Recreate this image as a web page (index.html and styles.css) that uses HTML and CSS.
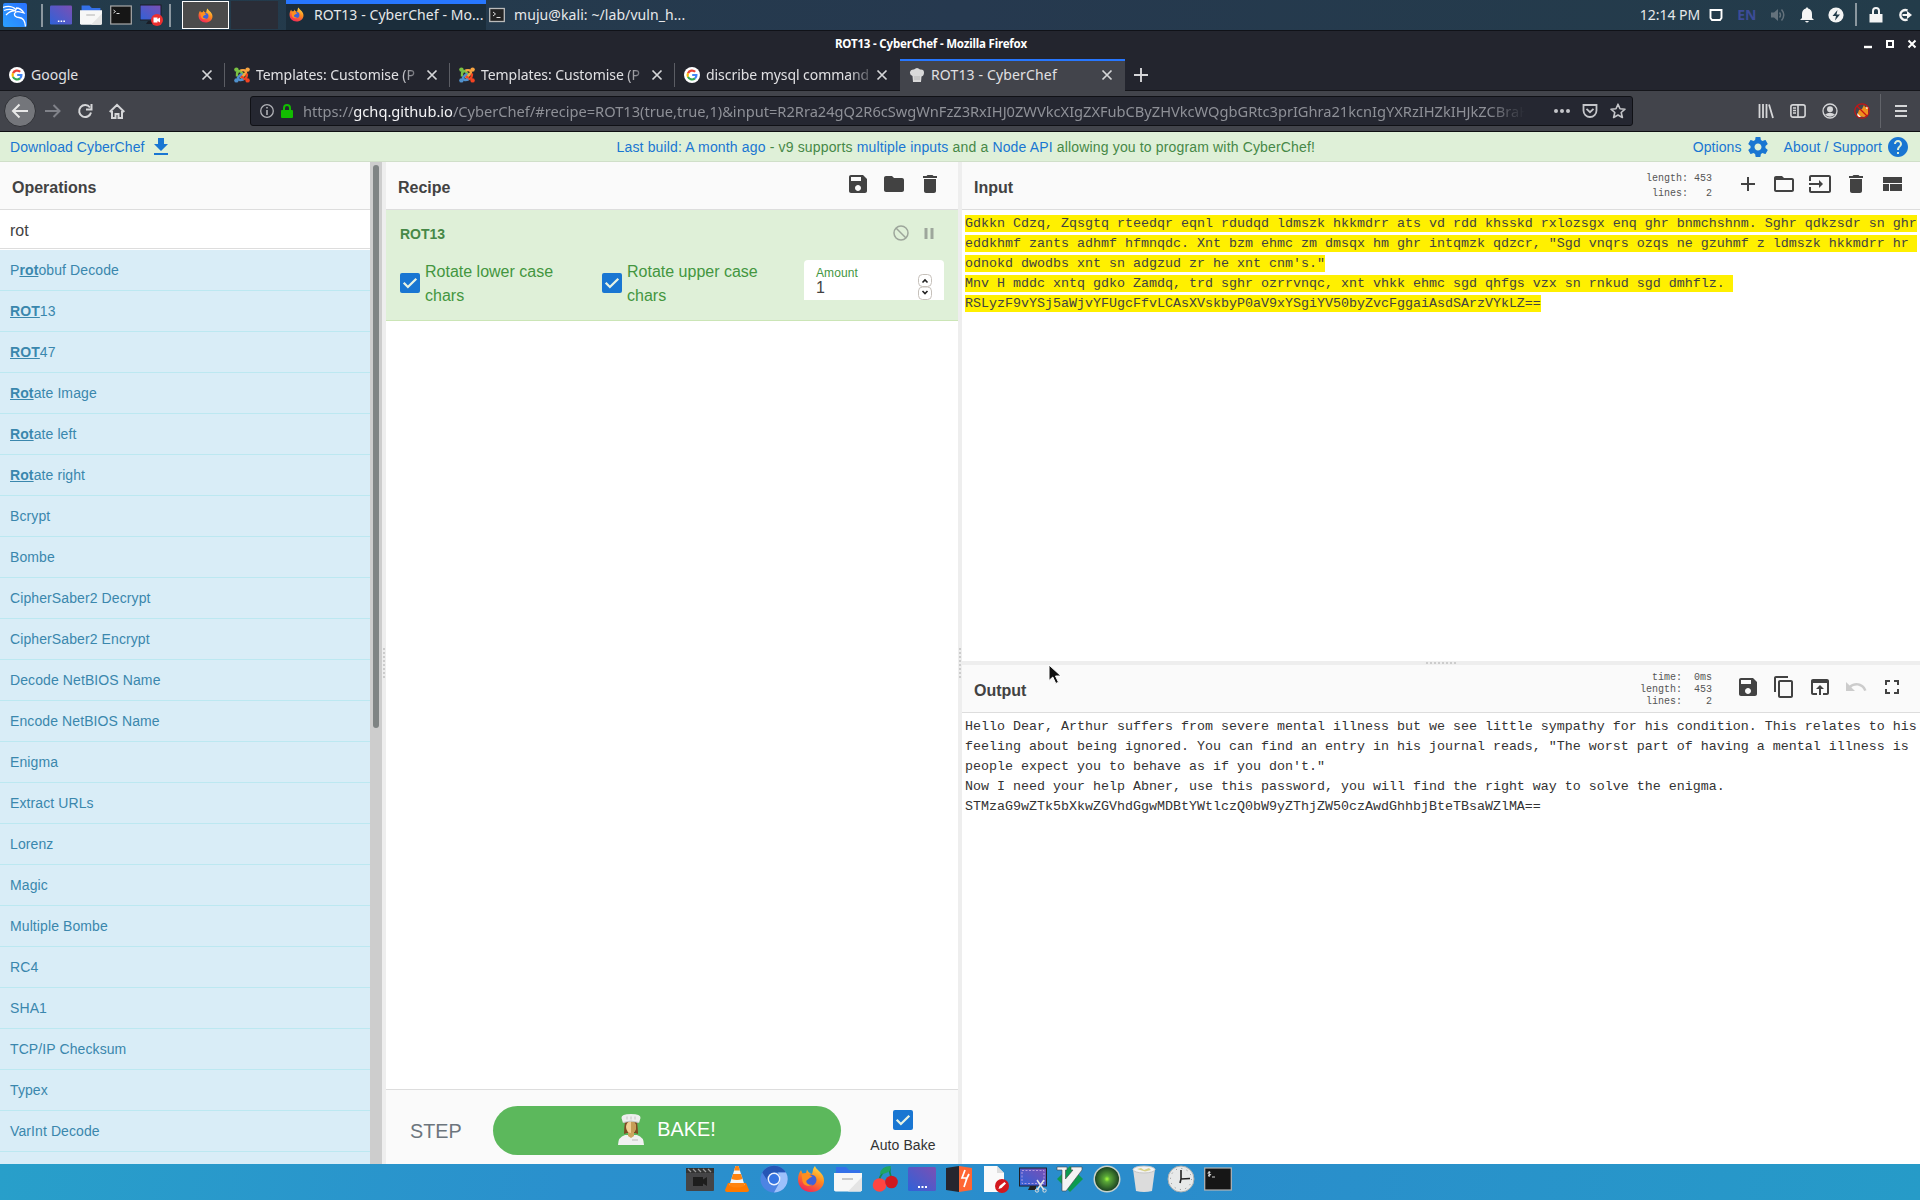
FILE: index.html
```html
<!DOCTYPE html>
<html lang="en">
<head>
<meta charset="utf-8">
<title>ROT13 - CyberChef</title>
<link rel="stylesheet" href="styles.css">
</head>
<body>
<svg class="defs" width="0" height="0">
  <defs>
    <linearGradient id="gScreen" x1="0" y1="1" x2="1" y2="0"><stop offset="0" stop-color="#2f62d8"/><stop offset="1" stop-color="#7b4fb4"/></linearGradient>
    <linearGradient id="gKali" x1="0" y1="1" x2="1" y2="0"><stop offset="0" stop-color="#2aa0ff"/><stop offset="1" stop-color="#2a72ff"/></linearGradient>
    <linearGradient id="gFox" x1="0.8" y1="0" x2="0.3" y2="1"><stop offset="0" stop-color="#ffe14a"/><stop offset="0.45" stop-color="#ff8a1e"/><stop offset="1" stop-color="#f0245a"/></linearGradient>
    <radialGradient id="gEye"><stop offset="0" stop-color="#a6ff3a"/><stop offset="0.25" stop-color="#5aa838"/><stop offset="1" stop-color="#1d4422"/></radialGradient>
  </defs>
  <symbol id="firefox" viewBox="0 0 28 28"><path d="M14 27C6.500 27 1 21.500 1 14.500c0-4 1.200-7 3-9.500l1.500 3.500L9 8l1-3.500c1 2.500 3 4 5 4.500 1-2 .5-5.500 3-8 .5 3 6 5.500 8 10 3.500 8-2.500 16-12 16z" fill="url(#gFox)"/><circle cx="14" cy="15" r="5.500" fill="#3f63d8"/><path d="M4.500 9c4-1.500 8 0 11 3-3 0-4 2.500-6 3.500-1 3 3 5 6 4-4 3-9 1-10-3z" fill="#ff8f1f"/></symbol>
  <symbol id="files" viewBox="0 0 28 28"><path d="M2 2h10l3 3h11v8H2z" fill="#3470e8"/><path d="M0 8h28v17.500l-1.500 1H1.500L0 25.500z" fill="#f7f7f7"/><path d="M28 12v13.500l-1.500 1H14z" fill="#e4e4e4"/><path d="M8 14h11" stroke="#bbb" stroke-width="1.500"/></symbol>
  <symbol id="screen" viewBox="0 0 28 28"><rect y="2" width="28" height="24" rx="1.500" fill="url(#gScreen)"/><path d="M10 22h2m1.500 0h2m1.500 0h2" stroke="#fff" stroke-width="2"/></symbol>
  <symbol id="google" viewBox="0 0 16 16"><circle cx="8" cy="8" r="8" fill="#fff"/><g fill="none" stroke-width="2.200"><path d="M11.200 4.800A4.500 4.500 0 0 0 4 6.200" stroke="#ea4335"/><path d="M4 6.200a4.500 4.500 0 0 0 0 3.700" stroke="#fbbc05"/><path d="M4 9.900a4.500 4.500 0 0 0 7 1.500" stroke="#34a853"/><path d="M11 11.400A4.400 4.400 0 0 0 12.400 8H8.200" stroke="#4285f4"/></g></symbol>
  <symbol id="joomla" viewBox="0 0 16 16"><g fill="none" stroke-width="2.400"><path d="M3 9.500V7q0-3 3-3l5 5" stroke="#7ac143"/><path d="M6.500 3.500Q12 2 12 6L6.500 11" stroke="#f9a541"/><path d="M13 6.500q0 5.500-3 5.500L5.500 7.500" stroke="#f44321"/><path d="M9.500 12.500Q4 14 4 10.500l4-4" stroke="#5091cd"/></g><circle cx="2.400" cy="2.600" r="2.200" fill="#7ac143"/><circle cx="13.600" cy="2.600" r="2.200" fill="#f9a541"/><circle cx="13.600" cy="13.400" r="2.200" fill="#f44321"/><circle cx="2.400" cy="13.400" r="2.200" fill="#5091cd"/></symbol>
  <symbol id="close" viewBox="0 0 12 12"><path d="M1.500 1.500l9 9m0-9l-9 9" stroke="#d5d6d8" stroke-width="1.700"/></symbol>
  <symbol id="save" viewBox="0 0 24 24"><path d="M17 3H5c-1.110 0-2 .9-2 2v14c0 1.100.89 2 2 2h14c1.100 0 2-.9 2-2V7l-4-4zm-5 16c-1.660 0-3-1.340-3-3s1.340-3 3-3 3 1.340 3 3-1.340 3-3 3zm3-10H5V5h10v4z"/></symbol>
  <symbol id="delete" viewBox="0 0 24 24"><path d="M6 19c0 1.100.9 2 2 2h8c1.100 0 2-.9 2-2V7H6v12zM19 4h-3.500l-1-1h-5l-1 1H5v2h14V4z"/></symbol>
  <symbol id="check" viewBox="0 0 20 20"><rect width="20" height="20" rx="2" fill="#1976d2"/><path d="M3.700 9.800l4.200 4.200 8.400-8.300" fill="none" stroke="#e8f3e4" stroke-width="2.300"/></symbol>
</svg>

<header class="panel">
  <svg class="kali" width="24" height="24" viewBox="0 0 24 24"><rect width="24" height="24" rx="2" fill="url(#gKali)"/><path d="M0 4.500Q8 1.500 13.500 7M1 7.500q6-2.500 12 .5M3 12q4-4.500 10-4M13 5q5 0 8 5l-2-.5Q13 7.500 11.500 10.500q-.5 3.500 4.500 4 6 .5 6.500 9" fill="none" stroke="#fff" stroke-width="1.300"/></svg>
  <i class="bar b1"></i>
  <svg width="22" height="22"><use href="#screen"/></svg>
  <svg width="22" height="22"><use href="#files"/></svg>
  <svg width="22" height="20" viewBox="0 0 22 20"><rect x=".7" y="1" width="20.600" height="18" fill="#161616" stroke="#aaa" stroke-width="1.200"/><path d="M3.500 5l2 1.500-2 1.500M6.500 8.500h3" stroke="#ddd" fill="none"/></svg>
  <svg width="24" height="22" viewBox="0 0 24 22"><rect width="21" height="15" y="1" fill="url(#gScreen)" stroke="#1c1c26"/><path d="M8 17h5v3H6z" fill="#191d27"/><circle cx="17" cy="16" r="6" fill="#ed2f2f"/><path d="M13.500 13.500h4v1.500l2.500-1.500v5l-2.500-1.500v1.500h-4z" fill="#fff"/></svg>
  <i class="bar b2"></i>
  <div class="launcher"><svg width="15" height="15"><use href="#firefox"/></svg></div>
  <div class="task active"><svg width="15" height="15"><use href="#firefox"/></svg><span>ROT13 - CyberChef - Mo...</span></div>
  <div class="task"><svg width="16" height="16" viewBox="0 0 16 16"><rect x=".7" y="1.500" width="14.600" height="13" fill="#222" stroke="#bbb" stroke-width="1.300"/><path d="M4 5l2.500 2L4 9M7.500 10.500h4" stroke="#ddd" fill="none"/></svg><span>muju@kali: ~/lab/vuln_h...</span></div>
  <div class="tray">
    <time>12:14 PM</time>
    <svg width="14" height="14" viewBox="0 0 14 14"><path d="M1.500 2h11v8l-1.500 2H3l-1.500-2z" fill="none" stroke="#fff" stroke-width="1.900"/></svg>
    <b>EN</b>
    <svg width="16" height="16" viewBox="0 0 16 16" fill="none" stroke="#64727c" stroke-width="1.500"><path d="M1 5.500h3L8 2v12L4 10.500H1z" fill="#64727c" stroke="none"/><path d="M9.500 5.500q2 2.500 0 5M11.500 2.500q4.500 5.500 0 11"/></svg>
    <svg width="14" height="16" viewBox="0 0 14 16" fill="#f4f4f4"><path d="M7 0l1.200 1.500Q12 2.500 12 7v4l2 2H0l2-2V7q0-4.500 3.800-5.500zM5 14h4q-2 3-4 0z"/></svg>
    <svg width="16" height="16" viewBox="0 0 16 16"><circle cx="8" cy="8" r="7.600" fill="#f4f4f4"/><path d="M9.500 3L4.500 9H8l-1 4.500 5-6H8.500z" fill="#233b4a"/></svg>
    <i class="bar"></i>
    <svg width="14" height="16" viewBox="0 0 14 16"><path d="M1 7h12.500v8.500H.5V7z" fill="#f4f4f4"/><path d="M4 8V4q0-3 3-3t3 3v4" fill="none" stroke="#f4f4f4" stroke-width="2"/></svg>
    <svg width="16" height="14" viewBox="0 0 16 14"><path d="M10.500 2.500A5 5 0 1 0 10.500 11.500" fill="none" stroke="#f4f4f4" stroke-width="2.400"/><path d="M5.500 6H10V3l5 4-5 4V8H5.500z" fill="#f4f4f4"/></svg>
  </div>
</header>

<div class="titlebar">
  <span>ROT13 - CyberChef - Mozilla Firefox</span>
  <svg width="54" height="12" viewBox="0 0 54 12" fill="none" stroke="#fff"><path d="M1 9h8" stroke-width="2.400"/><rect x="24" y="3" width="6" height="6" stroke-width="2"/><path d="M45.500 2.500l7 7m0-7l-7 7" stroke-width="2"/></svg>
</div>

<nav class="tabs">
  <div class="tab"><svg width="16" height="16"><use href="#google"/></svg><span>Google</span><svg class="x" width="12" height="12"><use href="#close"/></svg></div>
  <div class="tab"><svg width="16" height="16"><use href="#joomla"/></svg><span class="fade">Templates: Customise (P</span><svg class="x" width="12" height="12"><use href="#close"/></svg></div>
  <div class="tab"><svg width="16" height="16"><use href="#joomla"/></svg><span class="fade">Templates: Customise (P</span><svg class="x" width="12" height="12"><use href="#close"/></svg></div>
  <div class="tab last"><svg width="16" height="16"><use href="#google"/></svg><span class="fade">discribe mysql command</span><svg class="x" width="12" height="12"><use href="#close"/></svg></div>
  <div class="tab current"><svg width="16" height="16" viewBox="0 0 16 16"><path d="M4 15l-.5-6Q.5 8 1 5t4-2.500q3-3 6 0 4-.5 4 3t-2.500 4L12 15z" fill="#d9d9d9"/><path d="M6 9v4M8 9v4M10 9v4" stroke="#b5b5b5"/></svg><span>ROT13 - CyberChef</span><svg class="x" width="12" height="12"><use href="#close"/></svg></div>
  <svg class="plus" width="16" height="16" viewBox="0 0 16 16"><path d="M8 1v14M1 8h14" stroke="#d5d6d8" stroke-width="1.900"/></svg>
</nav>

<div class="navbar">
  <div class="back"><svg width="18" height="16" viewBox="0 0 18 16" fill="none" stroke="#e8e8e8" stroke-width="2"><path d="M17 8H2M8.500 1.500L2 8l6.500 6.500"/></svg></div>
  <svg class="fwd" width="16" height="16" viewBox="0 0 16 16" fill="none" stroke="#808289" stroke-width="2"><path d="M0 8h14M8.500 2L14.500 8l-6 6"/></svg>
  <svg class="reload" width="16" height="16" viewBox="0 0 16 16" fill="none" stroke="#d5d6d8" stroke-width="2"><path d="M13 4.500A6 6 0 1 0 14 9.500"/><path d="M14.500 1v5.500H9" /></svg>
  <svg class="home" width="16" height="16" viewBox="0 0 16 16" fill="none" stroke="#d5d6d8" stroke-width="2"><path d="M.7 9L8 1.800 15.300 9M3 8v7h3.500v-4h3v4H13V8"/></svg>
  <div class="urlbar">
    <svg width="14" height="14" viewBox="0 0 14 14" fill="none" stroke="#b0b1b6" stroke-width="1.300"><circle cx="7" cy="7" r="6.300"/><path d="M7 3v1.600M7 6v5" stroke-width="1.600"/></svg>
    <svg class="lock" width="12" height="14" viewBox="0 0 12 14"><rect y="6" width="12" height="8" rx="1" fill="#12bc00"/><path d="M3 7V4q0-3 3-3t3 3v3" fill="none" stroke="#12bc00" stroke-width="2"/></svg>
    <span class="url">https://<em>gchq.github.io</em>/CyberChef/#recipe=ROT13(true,true,1)&amp;input=R2Rra24gQ2R6cSwgWnFzZ3RxIHJ0ZWVkcXIgZXFubCByZHVkcWQgbGRtc3prIGhra21kcnIgYXRzIHZkIHJkZCBraH</span>
    <svg class="dots" width="16" height="4" viewBox="0 0 16 4" fill="#c4c5c9"><circle cx="2" cy="2" r="2"/><circle cx="8" cy="2" r="2"/><circle cx="14" cy="2" r="2"/></svg>
    <svg class="pocket" width="16" height="14" viewBox="0 0 16 14" fill="none" stroke="#c4c5c9" stroke-width="1.800"><path d="M1.500 1h13v5.500a6.500 6.500 0 0 1-13 0z"/><path d="M4.500 4.800L8 8.200l3.500-3.400"/></svg>
    <svg class="star" width="16" height="16" viewBox="0 0 16 16" fill="none" stroke="#c4c5c9" stroke-width="1.600" stroke-linejoin="round"><path d="M8 1.200l2 4.500 5 .5-3.800 3.300 1.200 5L8 12l-4.400 2.500 1.200-5L1 6.200l5-.5z"/></svg>
  </div>
  <div class="tools">
    <svg width="16" height="16" viewBox="0 0 16 16" stroke="#d5d6d8" stroke-width="1.800"><path d="M1.500 1v14M5 1v14M8.500 1v14M11 1.500l4 13.500"/></svg>
    <svg width="16" height="14" viewBox="0 0 16 14" fill="none" stroke="#d5d6d8" stroke-width="1.600"><rect x=".9" y=".9" width="14.200" height="12.200" rx="2"/><path d="M8 1v12M3 4h3M3 6.500h3M3 9h3"/></svg>
    <svg width="16" height="16" viewBox="0 0 16 16"><circle cx="8" cy="8" r="7" fill="none" stroke="#d5d6d8" stroke-width="1.300"/><circle cx="8" cy="6.300" r="3" fill="#d5d6d8"/><path d="M3 11.500q5-3.500 10 0-5 4.500-10 0z" fill="#d5d6d8"/></svg>
    <svg width="16" height="16" viewBox="0 0 16 16"><path d="M3 13l2-6 3-1 2-4 1 2 3 0 0 4 0 4-4 2z" fill="#f0901e"/><path d="M3 10l4 4H4zM13 3l2 2-3 1z" fill="#fff"/><circle cx="8" cy="8" r="7.200" fill="none" stroke="#c81414" stroke-width="1.200"/><path d="M3 3l10 10" stroke="#c81414" stroke-width="1.300"/></svg>
    <i></i>
    <svg width="14" height="14" viewBox="0 0 14 14" stroke="#d5d6d8" stroke-width="2"><path d="M1 2h12M1 7h12M1 12h12"/></svg>
  </div>
</div>

<main class="chef">
  <div class="banner">
    <a>Download CyberChef</a>
    <svg class="blue dl" width="24" height="24" viewBox="0 0 24 24"><path d="M19 9h-4V3H9v6H5l7 7 7-7zM5 18v2h14v-2H5z"/></svg>
    <p><a>Last build: A month ago</a> - v9 supports <a>multiple inputs</a> and a <a>Node API</a> allowing you to program with CyberChef!</p>
    <a class="opt">Options</a>
    <svg class="blue gear" width="24" height="24" viewBox="0 0 24 24"><path d="M19.430 12.980c.04-.32.07-.64.07-.98s-.03-.66-.07-.98l2.110-1.650c.19-.15.24-.42.12-.64l-2-3.460c-.12-.22-.39-.3-.61-.22l-2.490 1c-.52-.4-1.080-.73-1.690-.98l-.38-2.650C14.460 2.180 14.250 2 14 2h-4c-.25 0-.46.18-.49.42l-.38 2.650c-.61.25-1.170.59-1.690.98l-2.490-1c-.23-.09-.49 0-.61.22l-2 3.460c-.13.22-.07.49.12.64l2.110 1.650c-.04.32-.07.65-.07.98s.03.66.07.98l-2.110 1.650c-.19.15-.24.42-.12.64l2 3.460c.12.22.39.3.61.22l2.490-1c.52.4 1.080.73 1.690.98l.38 2.650c.03.24.24.42.49.42h4c.25 0 .46-.18.49-.42l.38-2.650c.61-.25 1.170-.59 1.690-.98l2.490 1c.23.09.49 0 .61-.22l2-3.460c.12-.22.07-.49-.12-.64l-2.110-1.650zM12 15.500c-1.930 0-3.500-1.570-3.500-3.500s1.570-3.500 3.500-3.500 3.500 1.570 3.500 3.500-1.570 3.500-3.500 3.500z"/></svg>
    <a class="about">About / Support</a>
    <svg class="blue help" width="24" height="24" viewBox="0 0 24 24"><path d="M12 2C6.480 2 2 6.480 2 12s4.480 10 10 10 10-4.480 10-10S17.520 2 12 2zm1 17h-2v-2h2v2zm2.070-7.750l-.9.92C13.450 12.900 13 13.500 13 15h-2v-.5c0-1.100.45-2.100 1.170-2.830l1.240-1.260c.37-.36.59-.86.59-1.410 0-1.100-.9-2-2-2s-2 .9-2 2H8c0-2.210 1.790-4 4-4s4 1.790 4 4c0 .88-.36 1.680-.93 2.250z"/></svg>
  </div>

  <div class="workspace">
    <section class="operations">
      <div class="oplist">
        <h2 class="head">Operations</h2>
        <div class="search">rot</div>
        <ul>
          <li>P<b>rot</b>obuf Decode</li><li><b>ROT</b>13</li><li><b>ROT</b>47</li><li><b>Rot</b>ate Image</li><li><b>Rot</b>ate left</li><li><b>Rot</b>ate right</li><li>Bcrypt</li><li>Bombe</li><li>CipherSaber2 Decrypt</li><li>CipherSaber2 Encrypt</li><li>Decode NetBIOS Name</li><li>Encode NetBIOS Name</li><li>Enigma</li><li>Extract URLs</li><li>Lorenz</li><li>Magic</li><li>Multiple Bombe</li><li>RC4</li><li>SHA1</li><li>TCP/IP Checksum</li><li>Typex</li><li>VarInt Decode</li><li></li>
        </ul>
      </div>
      <div class="scroll"><i></i></div>
    </section>
    <div class="gutter"><i></i></div>

    <section class="recipe">
      <div class="head"><h2>Recipe</h2>
        <div class="icons">
          <svg width="24" height="24"><use href="#save"/></svg>
          <svg width="24" height="24" viewBox="0 0 24 24"><path d="M10 4H4c-1.100 0-1.990.9-1.990 2L2 18c0 1.100.9 2 2 2h16c1.100 0 2-.9 2-2V8c0-1.100-.9-2-2-2h-8l-2-2z"/></svg>
          <svg width="24" height="24"><use href="#delete"/></svg>
        </div>
      </div>
      <div class="step">
        <div class="steptitle"><b>ROT13</b>
          <svg width="16" height="16" viewBox="0 0 16 16" fill="none" stroke="#9da69b" stroke-width="1.500"><circle cx="8" cy="8" r="7"/><path d="M3 3l10 10"/></svg>
          <svg width="10" height="11" viewBox="0 0 10 11" fill="#9da69b"><path d="M.5 0h3v11h-3zM6.500 0h3v11h-3z"/></svg>
        </div>
        <div class="args">
          <label><svg width="20" height="20"><use href="#check"/></svg><span>Rotate lower case chars</span></label>
          <label><svg width="20" height="20"><use href="#check"/></svg><span>Rotate upper case chars</span></label>
          <div class="amount"><div><small>Amount</small><span>1</span></div>
            <svg width="14" height="26" viewBox="0 0 14 26" fill="#fff" stroke="#c6c1bb"><rect x=".5" y=".5" width="13" height="12" rx="4"/><rect x=".5" y="13" width="13" height="12.500" rx="4"/><path d="M4.500 8.500L7 6l2.500 2.500M4.500 17L7 19.500 9.500 17" stroke="#222" stroke-width="1.600" fill="none"/></svg>
          </div>
        </div>
      </div>
      <div class="blank"></div>
      <footer>
        <span class="stepbtn">STEP</span>
        <button><svg width="26" height="32" viewBox="0 0 26 32"><path d="M0 31q0-8 7-10h12q7 2 7 10z" fill="#f1f1f1"/><path d="M14 26h6" stroke="#bbb"/><path d="M7 8h12q1 8 1 12l-3-1H9l-3 1q0-6 1-12z" fill="#7d4a22"/><path d="M10 17h6v5l-3 2-3-2z" fill="#cba45e"/><ellipse cx="13" cy="13" rx="5" ry="6" fill="#f0cf94"/><path d="M13 7q5 0 5 6t-5 6z" fill="#c79d57"/><path d="M5 9L3.500 4Q3 0 13 0t9.500 4L21 9q-8-3-16 0z" fill="#eee"/><path d="M5 8.500q8-3 16 0M9 2.500v3m4-3v3m4-3v3" fill="none" stroke="#bbb" stroke-width=".8"/></svg><span>BAKE!</span></button>
        <div class="auto"><svg width="20" height="20"><use href="#check"/></svg><span>Auto Bake</span></div>
      </footer>
    </section>
    <div class="gutter"><i></i></div>

    <section class="io">
      <div class="head"><h2>Input</h2>
        <pre class="stats in">length: 453
 lines:   2</pre>
        <div class="icons">
          <svg width="24" height="24" viewBox="0 0 24 24"><path d="M19 13h-6v6h-2v-6H5v-2h6V5h2v6h6v2z"/></svg>
          <svg width="24" height="24" viewBox="0 0 24 24"><path d="M20 6h-8l-2-2H4c-1.100 0-1.990.9-1.990 2L2 18c0 1.100.9 2 2 2h16c1.100 0 2-.9 2-2V8c0-1.100-.9-2-2-2zm0 12H4V8h16v10z"/></svg>
          <svg width="24" height="24" viewBox="0 0 24 24"><path d="M21 3.010H3c-1.100 0-2 .9-2 2V9h2V4.990h18v14.030H3V15H1v4.010c0 1.100.9 1.980 2 1.980h18c1.100 0 2-.88 2-1.980v-14c0-1.110-.9-2-2-2zM11 16l4-4-4-4v3H1v2h10v3z"/></svg>
          <svg width="24" height="24"><use href="#delete"/></svg>
          <svg width="24" height="24" viewBox="0 0 24 24"><path d="M3 19h6v-7H3v7zm7 0h12v-7H10v7zM3 5v6h19V5H3z"/></svg>
        </div>
      </div>
      <pre class="text intext"><mark>Gdkkn Cdzq, Zqsgtq rteedqr eqnl rdudqd ldmszk hkkmdrr ats vd rdd khsskd rxlozsgx enq ghr bnmchshnm. Sghr qdkzsdr sn ghr</mark>
<mark>eddkhmf zants adhmf hfmnqdc. Xnt bzm ehmc zm dmsqx hm ghr intqmzk qdzcr, "Sgd vnqrs ozqs ne gzuhmf z ldmszk hkkmdrr hr </mark>
<mark>odnokd dwodbs xnt sn adgzud zr he xnt cnm's."</mark>
<mark>Mnv H mddc xntq gdko Zamdq, trd sghr ozrrvnqc, xnt vhkk ehmc sgd qhfgs vzx sn rnkud sgd dmhflz. </mark>
<mark>RSLyzF9vYSj5aWjvYFUgcFfvLCAsXVskbyP0aV9xYSgiYV50byZvcFggaiAsdSArzVYkLZ==</mark></pre>
      <div class="hgutter"><i></i></div>
      <div class="head"><h2>Output</h2>
        <pre class="stats">  time:  0ms
length:  453
 lines:    2</pre>
        <div class="icons">
          <svg width="24" height="24"><use href="#save"/></svg>
          <svg width="24" height="24" viewBox="0 0 24 24"><path d="M16 1H4c-1.100 0-2 .9-2 2v14h2V3h12V1zm3 4H8c-1.100 0-2 .9-2 2v14c0 1.100.9 2 2 2h11c1.100 0 2-.9 2-2V7c0-1.100-.9-2-2-2zm0 16H8V7h11v14z"/></svg>
          <svg width="24" height="24" viewBox="0 0 24 24"><path d="M19 4H5c-1.110 0-2 .9-2 2v12c0 1.100.89 2 2 2h4v-2H5V8h14v10h-4v2h4c1.100 0 2-.9 2-2V6c0-1.100-.89-2-2-2zm-7 6l-4 4h3v6h2v-6h3l-4-4z"/></svg>
          <svg class="off" width="24" height="24" viewBox="0 0 24 24"><path d="M12.500 8c-2.650 0-5.050.99-6.900 2.600L2 7v9h9l-3.620-3.620c1.390-1.160 3.160-1.880 5.120-1.880 3.540 0 6.550 2.310 7.600 5.500l2.370-.78C21.080 11.030 17.150 8 12.500 8z"/></svg>
          <svg width="24" height="24" viewBox="0 0 24 24"><path d="M7 14H5v5h5v-2H7v-3zm-2-4h2V7h3V5H5v5zm12 7h-3v2h5v-5h-2v3zM14 5v2h3v3h2V5h-5z"/></svg>
        </div>
      </div>
      <pre class="text">Hello Dear, Arthur suffers from severe mental illness but we see little sympathy for his condition. This relates to his
feeling about being ignored. You can find an entry in his journal reads, "The worst part of having a mental illness is
people expect you to behave as if you don't."
Now I need your help Abner, use this password, you will find the right way to solve the enigma.
STMzaG9wZTk5bXkwZGVhdGgwMDBtYWtlczQ0bW9yZThjZW50czAwdGhhbjBteTBsaWZlMA==</pre>
    </section>
  </div>
</main>

<footer class="dock">
  <svg viewBox="0 0 28 28"><rect y="3" width="28" height="23" rx="1" fill="#444446"/><path d="M0 3h28v5H0z" fill="#333"/><path d="M2 4l3 3m2-3l3 3m2-3l3 3m2-3l3 3m2-3l3 3" stroke="#999" stroke-width="1.300"/><path d="M7 12h10v2.500l4-2.500v9l-4-2.500V21H7z" fill="#1d1d1d"/></svg>
  <svg viewBox="0 0 28 28"><path d="M5 18h18l3 7q0 2-2 2H4q-2 0-2-2z" fill="#ff7a00"/><path d="M12.500 1h3l6 19q-7.500 4-15 0z" fill="#f5f5f5"/><path d="M12.500 1h3l1.400 4.500h-5.800zM10 9h8l1.600 5q-5.600 2-11.200 0zM7.200 18h13.600l.9 3q-7.700 3-15.400 0z" fill="#ff8410"/></svg>
  <svg viewBox="0 0 28 28"><circle cx="14" cy="14" r="13.500" fill="#4d84e3"/><path d="M2.300 7.500a13.500 13.500 0 0 1 23.500 0H14l-6 9z" fill="#2556b5"/><path d="M26 7.500a13.500 13.500 0 0 1-12 20l6-11q1-5-2-9z" fill="#9cc0fb"/><circle cx="14" cy="14" r="6.500" fill="#eef3fd"/><circle cx="14" cy="14" r="5" fill="#3574e2"/></svg>
  <svg viewBox="0 0 28 28"><use href="#firefox"/></svg>
  <svg viewBox="0 0 28 28"><use href="#files"/></svg>
  <svg viewBox="0 0 28 28"><path d="M8 16Q9 8 19 2M20 12q-2-5-1-9" stroke="#138a4c" stroke-width="1.700" fill="none"/><path d="M9 9q1-8 11-8 0 8-11 8z" fill="#1fa463"/><circle cx="8.500" cy="20" r="6.800" fill="#ff4542"/><circle cx="20.500" cy="17" r="6.300" fill="#d01920"/></svg>
  <svg viewBox="0 0 28 28"><use href="#screen"/></svg>
  <svg viewBox="0 0 28 28"><path d="M1 3l13-2v26L1 25z" fill="#26262f"/><path d="M14 1l13 2v22l-13 2z" fill="#ff6633"/><path d="M20 5l-3 8h5l-3 9M24 9l-3 6" stroke="#fff" stroke-width="1.700" fill="none"/></svg>
  <svg viewBox="0 0 28 28"><path d="M2 1h13l7 7v19H2z" fill="#fafafa"/><path d="M15 1l7 7h-7z" fill="#dedede"/><circle cx="20" cy="21" r="7" fill="#d3181e"/><path d="M16.500 24l1-3 5-4 1.500 1.500-4.500 4.500z" fill="#fff"/></svg>
  <svg viewBox="0 0 28 28"><rect x=".5" y="3" width="27" height="18" fill="url(#gScreen)" stroke="#1d1d26"/><rect x="3" y="5.500" width="22" height="13" fill="none" stroke="#c8a8e8" stroke-dasharray="2 1.500" stroke-width=".8"/><path d="M11 21h6v4H9z" fill="#222"/><path d="M18 15l7 10M25 15l-7 10" stroke="#e6e6e6" stroke-width="1.500"/><circle cx="18" cy="25.500" r="1.700" fill="none" stroke="#ddd"/><circle cx="25.500" cy="25.500" r="1.700" fill="none" stroke="#ddd"/></svg>
  <svg viewBox="0 0 28 28"><path d="M14 1l13 13-13 13L1 14z" fill="#0c9a50"/><path d="M1 2h10v3H9.500v9L17 5h-2V2h11v3L10 26H6V5H1z" fill="#f4f4f4" stroke="#444" stroke-width=".6"/></svg>
  <svg viewBox="0 0 28 28"><circle cx="14" cy="14" r="13.500" fill="#c9d3cb"/><circle cx="14" cy="14" r="12" fill="url(#gEye)"/></svg>
  <svg viewBox="0 0 28 28"><path d="M3 4h22l-3 22q-8 2-16 0z" fill="#dcdcdc"/><ellipse cx="14" cy="4.500" rx="11" ry="3.500" fill="#f3f3f3" stroke="#c7c7c7"/><path d="M7 4l4-1 3 2 5-2 2 2-6 1.500z" fill="#d8d18a"/></svg>
  <svg viewBox="0 0 28 28"><circle cx="14" cy="14" r="13" fill="#e7e9e9" stroke="#a9afb0"/><path d="M14 5v9l9-.5M14 14l-1 4" stroke="#222" stroke-width="1.600" fill="none"/><circle cx="14" cy="14" r="10.500" fill="none" stroke="#888" stroke-dasharray="1 4.500"/></svg>
  <svg viewBox="0 0 28 28"><rect x=".7" y="3" width="26.600" height="22" fill="#161616" stroke="#b5b5b5" stroke-width="1.200"/><path d="M6.500 7.300q-3-.5-2.500 1t2.500 1.200-2.500 1.300M5.200 6v6M8 12h3" stroke="#e4e4e4" fill="none" stroke-width=".9"/></svg>
</footer>
<svg class="cursor" width="14" height="22" viewBox="0 0 14 22"><path d="M1 1v15.500l3.800-3.500 3 6.500 2.700-1.200-3-6.300H13z" fill="#111" stroke="#fff"/></svg>
</body>
</html>
```
FILE: styles.css
```css
* { box-sizing: border-box; }
body {
  margin: 0; width: 1920px; height: 1200px; overflow: hidden;
  display: flex; flex-direction: column;
  font-family: "Liberation Sans", Arial, sans-serif; font-size: 14px; color: #424242;
  background: #fff;
}
svg { display: block; flex: none; }
.defs { position: absolute; }
h2, p, ul, pre { margin: 0; padding: 0; }

/* desktop panel */
.panel {
  height: 31px; flex: none; display: flex; align-items: center;
  background: linear-gradient(90deg, #233b4a, #26394f 50%, #233c4a); border-bottom: 1px solid #101218;
  padding-left: 3px; gap: 8px; color: #e6e8ea;
  font-family: "Noto Sans", sans-serif; font-size: 14px; white-space: nowrap;
}
.bar { width: 2px; height: 23px; background: #8b979f; flex: none; }
.b1 { margin: 0 -1px 0 6px; }
.b2 { margin: 0 0 0 -3px; }
.launcher {
  width: 47px; height: 28px; margin-left: 3px; border: 1px solid #fff; background: #4b4b4b;
  display: flex; align-items: center; justify-content: center;
  box-shadow: 49px 0 0 #2a2d37;
}
.task { width: 200px; height: 30px; display: flex; align-items: center; gap: 10px; padding: 0 2px 1px 3px; overflow: hidden; letter-spacing: .08px; }
.task.active { margin-left: 49px; background: #1b2d3b; border-top: 4px solid #2777ff; padding-bottom: 5px; }
.task + .task { margin-left: -8px; gap: 9px; }
.tray { margin-left: auto; display: flex; align-items: center; gap: 14.3px; padding: 0 7px 1px 0; }
.tray time { width: 60px; margin-right: -5px; }
.tray b { color: #3d4c98; width: 18px; }
.tray .bar { margin: 0 -3px; }

/* window chrome */
.titlebar {
  height: 28px; flex: none; background: #23252e; color: #fff; display: flex; align-items: center;
  font: bold 11.5px "Noto Sans", sans-serif; letter-spacing: -.18px; padding: 0 3px 3px 835px; justify-content: space-between; white-space: nowrap;
}
.tabs {
  height: 32px; flex: none; display: flex; background: #23252e; border-bottom: 1px solid #15161b;
  font: 14px "Noto Sans", sans-serif; color: #e0e0e3;
}
.tab { width: 225px; height: 31px; display: flex; align-items: center; padding: 0 12px 0 9px; white-space: nowrap; position: relative; }
.tab::after { content: ""; position: absolute; right: 0; top: 4px; height: 24px; width: 1px; background: #5b5d64; }
.tab.last::after, .tab.current::after { display: none; }
.tab span { flex: 1; margin-left: 6px; }
.tab .fade { letter-spacing: -.06px; -webkit-mask-image: linear-gradient(90deg, #000 143px, transparent 170px); mask-image: linear-gradient(90deg, #000 143px, transparent 170px); }
.tab .x { margin-left: 5px; }
.tab.current { height: 32px; background: #42444b; border-top: 2px solid #2777ff; padding-bottom: 3px; letter-spacing: .15px; }
.plus { margin: 8px 0 0 8px; }

.navbar { height: 41px; flex: none; display: flex; align-items: center; background: #42444b; border-bottom: 1px solid #0e0f12; padding-left: 4px; }
.back { width: 32px; height: 32px; border-radius: 50%; background: #74767b; border: 1px solid #2f3136; display: flex; align-items: center; justify-content: center; }
.fwd { margin-left: 9px; }
.reload { margin-left: 16px; }
.home { margin-left: 16px; }
.urlbar {
  width: 1383px; height: 30px; margin-left: 125px; border: 1px solid #101116; border-radius: 3px;
  background: #252731; display: flex; align-items: center; padding: 0 6px 0 9px;
}
.lock { margin-left: 7px; }
.url {
  margin-left: 10px; width: 1230px; white-space: nowrap; color: #8e9097;
  font: 14.670px "Noto Sans", sans-serif; letter-spacing: -.02px;
  -webkit-mask-image: linear-gradient(90deg, #000 1185px, transparent 1222px); mask-image: linear-gradient(90deg, #000 1185px, transparent 1222px);
}
.url em { color: #f4f4f6; font-style: normal; }
.dots { margin-left: auto; }
.pocket, .star { margin-left: 12px; }
.tools { margin-left: auto; display: flex; align-items: center; gap: 16px; padding-right: 12px; }
.tools i { width: 1px; height: 34px; background: #62646a; margin: 0 -3px 0 -6px; }

/* application */
.chef { flex: 1; min-height: 0; display: flex; flex-direction: column; }
.banner {
  height: 30px; flex: none; background: #dff0d8; border-bottom: 1px solid #d0dfc9; color: #468847;
  display: flex; align-items: center; padding: 0 10px; white-space: nowrap; letter-spacing: .08px;
}
.banner a { color: #1976d2; }
.blue { fill: #1976d2; }
.dl { margin-left: 4px; }
.banner p { margin-left: 444px; letter-spacing: .155px; }
.banner .opt { margin-left: auto; }
.gear { margin-left: 4px; }
.about { margin-left: 14px; }
.help { margin-left: 4px; }
.workspace { flex: 1; min-height: 0; display: flex; }
.head {
  height: 48px; flex: none; background: #fafafa; border-bottom: 1px solid #ddd;
  display: flex; align-items: center; padding: 3px 12px 0; font-size: 16px; font-weight: bold;
}
h2.head { padding-top: 5px; }
.head h2 { font-size: 16px; padding-top: 2px; }
.icons { display: flex; gap: 12px; padding-bottom: 6px; margin-left: auto; fill: #424242; }
.off { fill: #ccc; }
.operations { width: 382px; display: flex; }
.oplist { width: 370px; overflow: hidden; }
.search { height: 39px; border-bottom: 1px solid #ddd; padding-left: 10px; line-height: 41px; font-size: 16px; }
.oplist ul { margin-top: 1px; list-style: none; letter-spacing: .1px; }
.oplist li { height: 41px; line-height: 41px; padding-left: 10px; background: #d9edf7; border-bottom: 1px solid #bce8f1; color: #3a87ad; }
.oplist b { text-decoration: underline; }
.scroll { width: 12px; background: #cdcdcd; padding: 3px; }
.scroll i { display: block; height: 563px; border-radius: 3px; background: #7f8484; }
.gutter { width: 4px; background: #eee; display: flex; align-items: center; justify-content: center; }
.gutter i { width: 2px; height: 30px; background: repeating-linear-gradient(#ccc 0 2px, transparent 2px 4px); }
.hgutter { height: 4px; flex: none; background: #eee; display: flex; align-items: center; justify-content: center; }
.hgutter i { height: 2px; width: 30px; background: repeating-linear-gradient(90deg, #ccc 0 2px, transparent 2px 4px); }

.recipe { width: 572px; display: flex; flex-direction: column; }
.recipe .icons { padding-right: 4px; }
.step { height: 111px; background: #dff0d8; border-bottom: 1px solid #cbe5b6; padding: 14px 14px 0; color: #468847; }
.steptitle { height: 18px; display: flex; align-items: center; }
.steptitle b { margin-right: auto; padding-top: 2px; }
.steptitle svg { margin: 0 10px 0 5px; }
.args { height: 50px; display: flex; margin-top: 17px; }
.args label { width: 202px; height: 50px; display: flex; align-items: center; font-size: 16px; line-height: 24px; color: #43963f; }
.args label svg { margin-top: 14px; align-self: flex-start; }
.args label span { width: 140px; margin-left: 5px; }
.amount { margin-top: 1px; width: 140px; height: 40px; background: #fff; border-radius: 4px 4px 0 0; padding: 0 12px; display: flex; justify-content: space-between; align-items: flex-end; }
.amount small { display: block; font-size: 12px; line-height: 14px; color: #43963f; letter-spacing: .1px; }
.amount span { display: block; font-size: 16px; line-height: 16px; color: #424242; height: 20px; }
.blank { flex: 1; }
.recipe footer { height: 75px; background: #fafafa; border-top: 1px solid #ddd; display: flex; padding: 16px 0 0 24px; }
.stepbtn { width: 83px; flex: none; font-size: 19.8px; color: #6c757d; line-height: 50px; }
.recipe button {
  width: 348px; flex: none; height: 49px; border: 0; border-radius: 25px; background: #5cb85c; color: #fff;
  font: 19.8px "Liberation Sans", sans-serif; display: flex; align-items: center; justify-content: center; gap: 13px; padding: 0 0 2px;
}
.auto { width: 110px; margin-left: 7px; display: flex; flex-direction: column; align-items: center; padding-top: 4px; gap: 7px; color: #333; letter-spacing: .08px; }

.io { flex: 1; display: flex; flex-direction: column; }
.stats { margin: -1px 24px 0 auto; font: 10px/12px "Liberation Mono", monospace; color: #555; }
.stats.in { line-height: 15px; margin-top: -2px; }
.io .icons { margin-left: 0; padding-right: 4px; }
.text { padding: 4px 0 0 3px; font: 13.333px/20px "Liberation Mono", monospace; color: #333; }
.intext { height: 451px; flex: none; }
mark { background: #fff000; color: #424242; padding: 1px 0; }

.dock {
  height: 36px; flex: none; display: flex; justify-content: center; gap: 9px; padding: 1px 2px 0 0;
  background: linear-gradient(100deg, #289fca, #2a90cd 30%, #2a8ccc 60%, #269bc8);
}
.dock svg { width: 28px; height: 28px; }
.cursor { position: absolute; left: 1048px; top: 664px; }
```
